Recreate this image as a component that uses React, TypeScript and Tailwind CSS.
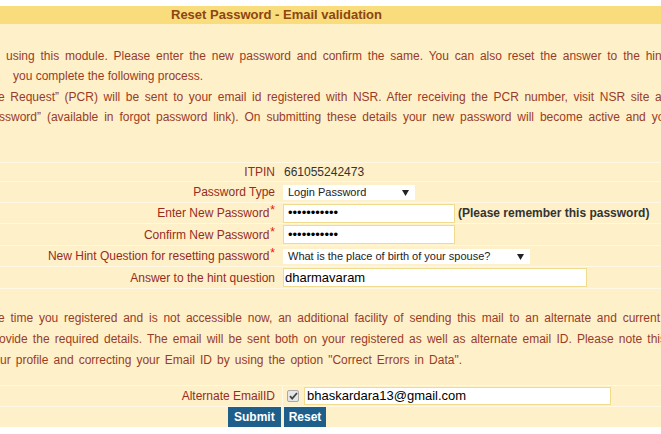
import type { ReactNode } from "react";

function Req() {
  return <span className="relative -top-[3px] ml-[1px] text-[12px] text-[#e8140c]">*</span>;
}

function Row({
  label,
  children,
  h,
}: {
  label: ReactNode;
  children: ReactNode;
  h: string;
}) {
  return (
    <div className={`grid grid-cols-[280px_1fr] border-t border-[#fff8e4] ${h}`}>
      <div className="flex items-center justify-end pr-[5px] text-[#952d1e]">{label}</div>
      <div className="flex items-center pl-[3px]">{children}</div>
    </div>
  );
}

function Arrow() {
  return (
    <svg width="7" height="6" viewBox="0 0 7 6" className="absolute top-[5px] right-[6px]">
      <path d="M0 0h7L3.5 6z" fill="#222" />
    </svg>
  );
}

export default function App() {
  return (
    <div className="w-[661px] h-[434px] overflow-hidden bg-white font-['Liberation_Sans',Arial,sans-serif] text-[12px]">
      <div className="h-[6px]" />
      <div className="h-[18px] bg-[#f9dc7b] pl-[171px] text-[13px] font-bold leading-[18px] text-[#8d4512]">
        Reset Password - Email validation
      </div>

      <div className="bg-[#fef0c9]">
        <div className="h-[138px] pt-[22px] leading-[20.4px] text-[#983c28] whitespace-nowrap">
          <div className="ml-[6px] w-[659px] text-justify [text-align-last:justify] whitespace-normal">
            using this module. Please enter the new password and confirm the same. You can also reset the answer to the hint
          </div>
          <div className="ml-[13px]">you complete the following process.</div>
          <div className="-ml-[2px] w-[677px] text-justify [text-align-last:justify] whitespace-normal">
            e Request” (PCR) will be sent to your email id registered with NSR. After receiving the PCR number, visit NSR site and
          </div>
          <div className="-ml-[1px] w-[672px] text-justify [text-align-last:justify] whitespace-normal">
            ssword” (available in forgot password link). On submitting these details your new password will become active and you
          </div>
        </div>

        <Row h="h-[19px]" label="ITPIN">
          <span className="pl-[1px] text-[#333]">661055242473</span>
        </Row>
        <Row h="h-[21px]" label="Password Type">
          <div className="relative">
            <select
              defaultValue="login"
              className="block h-[15px] w-[132px] appearance-none bg-white pl-[5px] text-[11px] leading-[15px] text-[#222] outline-none"
            >
              <option value="login">Login Password</option>
            </select>
            <Arrow />
          </div>
        </Row>
        <Row
          h="h-[21px]"
          label={
            <>
              Enter New Password
              <Req />
            </>
          }
        >
          <input
            type="password"
            readOnly
            defaultValue="dharmavaram"
            className="h-[19px] w-[172px] border border-[#f1db8d] bg-white px-[4px] text-[13px] text-black outline-none"
          />
          <span className="ml-[3px] font-bold text-[#333]">(Please remember this password)</span>
        </Row>
        <Row
          h="h-[22px]"
          label={
            <>
              Confirm New Password
              <Req />
            </>
          }
        >
          <input
            type="password"
            readOnly
            defaultValue="dharmavaram"
            className="h-[19px] w-[172px] border border-[#f1db8d] bg-white px-[4px] text-[13px] text-black outline-none"
          />
        </Row>
        <Row
          h="h-[21px]"
          label={
            <>
              New Hint Question for resetting password
              <Req />
            </>
          }
        >
          <div className="relative">
            <select
              defaultValue="spouse"
              className="block h-[15px] w-[247px] appearance-none bg-white pl-[5px] text-[11px] leading-[15px] text-[#222] outline-none"
            >
              <option value="spouse">What is the place of birth of your spouse?</option>
            </select>
            <Arrow />
          </div>
        </Row>
        <Row h="h-[22px]" label="Answer to the hint question">
          <input
            type="text"
            readOnly
            defaultValue="dharmavaram"
            className="h-[19px] w-[304px] border border-[#f1db8d] bg-white px-[1px] text-[13px] text-black outline-none"
          />
        </Row>

        <div className="h-[97px] border-t border-[#fff8e4] pt-[19px] leading-[21px] text-[#983c28] whitespace-nowrap">
          <div className="-ml-[2px] w-[662px] text-justify [text-align-last:justify] whitespace-normal">
            e time you registered and is not accessible now, an additional facility of sending this mail to an alternate and current
          </div>
          <div className="-ml-[1px] w-[667px] text-justify [text-align-last:justify] whitespace-normal">
            ovide the required details. The email will be sent both on your registered as well as alternate email ID. Please note this
          </div>
          <div className="w-[462px] text-justify [text-align-last:justify] whitespace-normal">
            ur profile and correcting your Email ID by using the option "Correct Errors in Data".
          </div>
        </div>

        <div className="grid h-[21px] grid-cols-[283px_1fr] border-t border-[#fff8e4]">
          <div className="flex items-center justify-end border-r border-[#fff8e4] pr-[7px] text-[#952d1e]">
            Alternate EmailID
          </div>
          <div className="flex items-center pl-[4px]">
            <span className="flex h-[12px] w-[12px] items-center justify-center rounded-[2px] border border-[#a9a9a9] bg-[#e6e6e6]">
              <svg width="9" height="8" viewBox="0 0 9 8">
                <path d="M1 4.2l2.2 2.4L8 1" fill="none" stroke="#444" strokeWidth="1.8" />
              </svg>
            </span>
            <input
              type="text"
              readOnly
              defaultValue="bhaskardara13@gmail.com"
              className="ml-[5px] h-[18px] w-[307px] border border-[#f1db8d] bg-white px-[2px] text-[13px] text-black outline-none"
            />
          </div>
        </div>
        <div className="flex h-[21px] items-end gap-[3px] border-t border-[#fff8e4] pl-[228px]">
          <button className="h-[20px] bg-[#1d5e8a] px-[6px] font-bold text-white">Submit</button>
          <button className="h-[20px] bg-[#1d5e8a] px-[5px] font-bold text-white">Reset</button>
        </div>
      </div>
    </div>
  );
}
